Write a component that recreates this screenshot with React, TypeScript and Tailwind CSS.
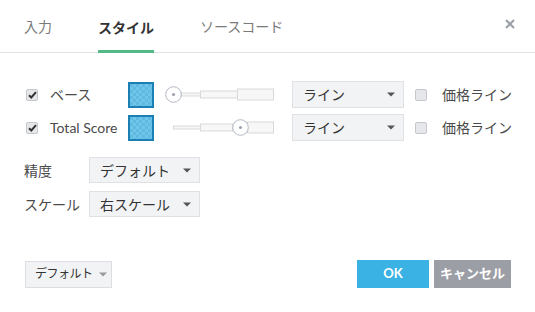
import React from 'react';

const font = "font-['Lato','Noto_Sans_CJK_JP',sans-serif]";

const Arrow = ({ className = 'text-[#555]' }: { className?: string }) => (
  <svg width="8" height="5" viewBox="0 0 8 5" className={className}>
    <path d="M0 0.5h8L4 4.5z" fill="currentColor" />
  </svg>
);

const Check = ({ checked }: { checked: boolean }) => (
  <span className="w-[12px] h-[12px] rounded-[2px] border border-[#c4c7cc] bg-[#e6e7ea] flex items-center justify-center shrink-0">
    {checked && (
      <svg width="9" height="8" viewBox="0 0 9 8">
        <path d="M1 4.2l2.3 2.3L8 1.2" stroke="#333" strokeWidth="2" fill="none" />
      </svg>
    )}
  </span>
);

const Swatch = ({ id }: { id: string }) => (
  <span className="w-[26px] h-[26px] border-2 border-[#1a7fb2] shrink-0 block">
    <svg width="22" height="22" className="block">
      <defs>
        <pattern id={id} width="6" height="6" patternUnits="userSpaceOnUse">
          <rect width="6" height="6" fill="#6fc5ea" />
          <rect width="3" height="3" fill="#60b9e1" />
          <rect x="3" y="3" width="3" height="3" fill="#60b9e1" />
        </pattern>
      </defs>
      <rect width="22" height="22" fill={`url(#${id})`} />
    </svg>
  </span>
);

const Knob = ({ cx }: { cx: number }) => (
  <g>
    <circle cx={cx} cy="13.5" r="7.8" fill="#fff" stroke="#b4b8c4" strokeWidth="1" />
    <circle cx={cx} cy="13.5" r="1.6" fill="#9ea2ae" />
  </g>
);

const Slider = ({ pos }: { pos: 'start' | 'mid' }) => (
  <svg width="112" height="27" className="block shrink-0">
    <g fill="#f7f7f7" stroke="#d7d9dd" strokeWidth="1">
      {pos === 'start' ? (
        <>
          <rect x="18.5" y="12" width="19" height="3" />
          <rect x="37.5" y="10" width="37" height="7" />
          <rect x="74.5" y="8" width="36" height="11" />
        </>
      ) : (
        <>
          <rect x="10.5" y="12" width="27" height="3" />
          <rect x="37.5" y="10" width="32" height="7" />
          <rect x="84.5" y="8" width="26" height="11" />
        </>
      )}
    </g>
    <Knob cx={pos === 'start' ? 10.5 : 77.5} />
  </svg>
);

const Select = ({ label, w, h }: { label: string; w: string; h: string }) => (
  <div className={`${w} ${h} bg-[#f2f3f5] border border-[#dfe1e5] flex items-center justify-between pl-[10px] pr-[8px] text-[14px] text-[#333] shrink-0`}>
    <span>{label}</span>
    <Arrow />
  </div>
);

const SeriesRow = ({ label, pos, id }: { label: string; pos: 'start' | 'mid'; id: string }) => (
  <div className="flex items-center h-[27px] pl-[26px]">
    <Check checked />
    <span className="ml-[12px] w-[78px] text-[14px] text-[#4a4a4a] whitespace-nowrap">{label}</span>
    <Swatch id={id} />
    <span className="ml-[9px]">
      <Slider pos={pos} />
    </span>
    <span className="ml-[17px]">
      <Select label="ライン" w="w-[112px]" h="h-[27px]" />
    </span>
    <span className="ml-[11px]">
      <Check checked={false} />
    </span>
    <span className="ml-[15px] text-[14px] text-[#4a4a4a] whitespace-nowrap">価格ライン</span>
  </div>
);

export default function App() {
  return (
    <div className={`w-[535px] h-[312px] bg-white overflow-hidden ${font}`}>
      <div className="h-[53px] border-b border-[#e0e3e6] flex items-end relative">
        <div className="flex items-end pl-[24px] gap-[46px] text-[14px]">
          <div className="h-[52px] flex items-center text-[#7a7a7a]">入力</div>
          <div className="h-[52px] flex items-center font-bold text-[#333] border-b-[3px] border-[#53b987] pt-[3px] -mb-px">スタイル</div>
          <div className="h-[52px] flex items-center text-[#7a7a7a]">ソースコード</div>
        </div>
        <svg width="10" height="10" viewBox="0 0 10 10" className="absolute left-[505px] top-[19px]">
          <path d="M1 1l8 8M9 1l-8 8" stroke="#9a9ea6" strokeWidth="2" />
        </svg>
      </div>

      <div className="pt-[28px] flex flex-col gap-[6px]">
        <SeriesRow label="ベース" pos="start" id="p1" />
        <SeriesRow label="Total Score" pos="mid" id="p2" />
      </div>

      <div className="pt-[16px] pl-[24px] flex flex-col gap-[8px] text-[14px] text-[#4a4a4a]">
        <div className="flex items-center">
          <span className="w-[65px]">精度</span>
          <Select label="デフォルト" w="w-[111px]" h="h-[26px]" />
        </div>
        <div className="flex items-center">
          <span className="w-[65px]">スケール</span>
          <Select label="右スケール" w="w-[111px]" h="h-[26px]" />
        </div>
      </div>

      <div className="mt-[43px] flex items-center pl-[25px] pr-[24px]">
        <div className="w-[87px] h-[27px] bg-[#f2f3f5] border border-[#dcdee2] flex items-center justify-between pl-[9px] pr-[4px] text-[12px] tracking-[-0.5px] text-[#333] whitespace-nowrap">
          <span>デフォルト</span>
          <Arrow className="text-[#999]" />
        </div>
        <div className="ml-auto flex gap-[5px]">
          <button className="w-[72px] h-[28px] bg-[#3bb2e4] text-white font-bold text-[13px]">OK</button>
          <button className="w-[77px] h-[28px] bg-[#9c9ea5] text-white font-bold text-[13px]">キャンセル</button>
        </div>
      </div>
    </div>
  );
}
